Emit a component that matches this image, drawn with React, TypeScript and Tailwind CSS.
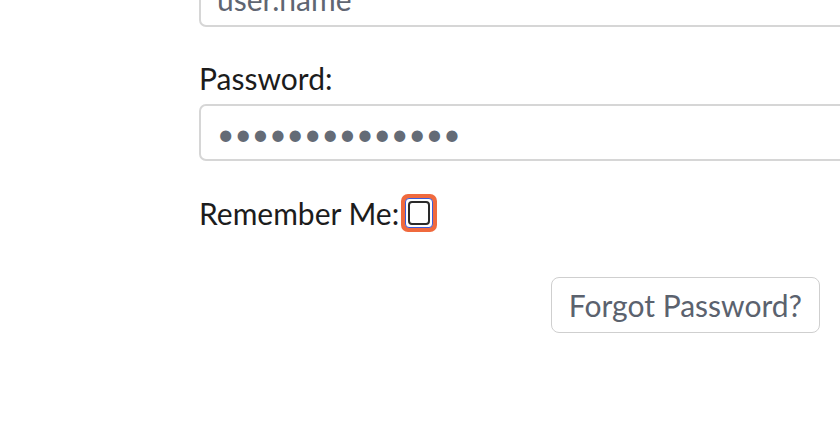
export default function App() {
  return (
    <div className="w-[840px] h-[427px] overflow-hidden bg-white font-['Lato',sans-serif] text-[30px] leading-[1.2] text-[#1c1c1c]">
      <div className="flex flex-col pl-[199px] w-[820px] -mt-[30px]">
        <input
          type="text"
          placeholder="user.name"
          className="w-[700px] h-[57px] shrink-0 px-[16px] border-2 border-[#d6d6d6] rounded-[7px] text-[#5f6672] placeholder:text-[#5f6672] outline-none"
        />
        <label className="mt-[33px] mb-[8px]">Password:</label>
        <input
          type="password"
          defaultValue="12345678901234"
          className="w-[700px] h-[57px] shrink-0 px-[16px] border-2 border-[#d6d6d6] rounded-[7px] text-[#646b76] text-[30px] outline-none"
        />
        <div className="flex items-center mt-[33px]">
          <span>Remember Me:</span>
          <span className="ml-[2px] inline-flex rounded-[7px] bg-[#f06a3e] p-[4px]">
            <span className="inline-flex rounded-[4px] border border-[#3b5bd8] bg-white p-[2px]">
              <input
                type="checkbox"
                className="appearance-none block w-[22px] h-[24px] border-2 border-[#2a2a2a] rounded-[4px] bg-white"
              />
            </span>
          </span>
        </div>
        <div className="flex justify-end mt-[45px]">
          <button className="h-[56px] px-[17px] border border-[#cfcfcf] rounded-[8px] bg-white text-[#5b626e]">
            Forgot Password?
          </button>
        </div>
      </div>
    </div>
  );
}
